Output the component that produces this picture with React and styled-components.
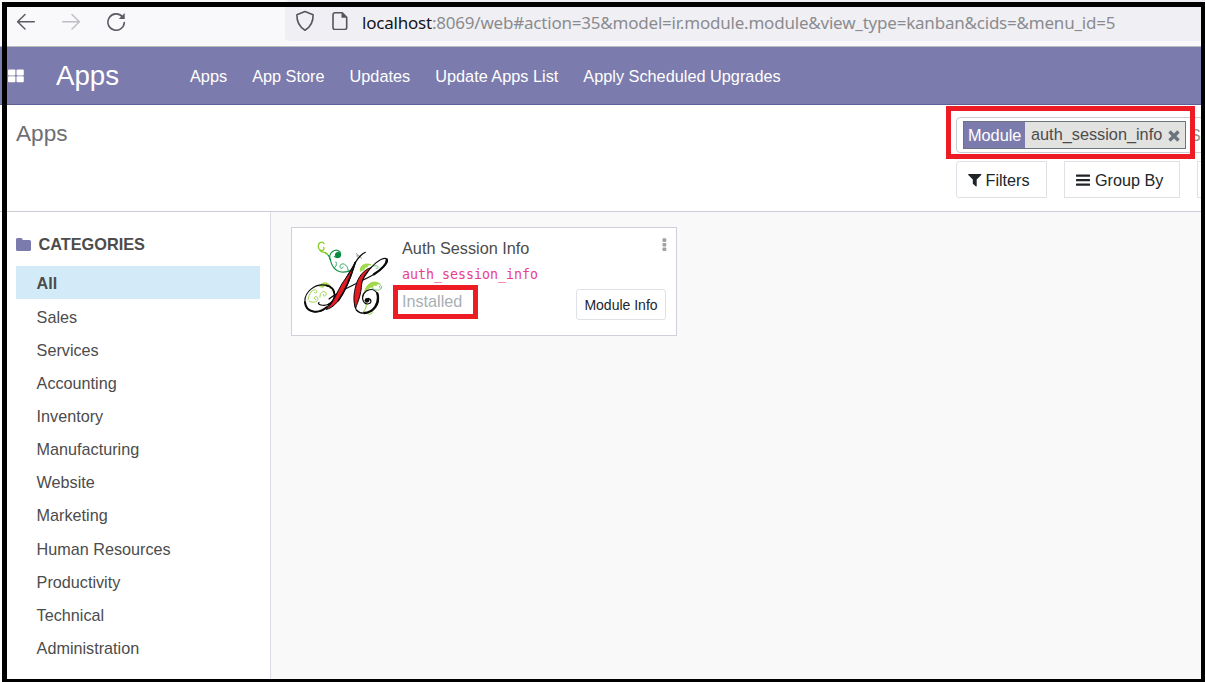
import React from "react";
import styled, { createGlobalStyle } from "styled-components";

const Global = createGlobalStyle`
  *, *::before, *::after { box-sizing: border-box; }
  body { margin: 0; overflow: hidden; }
`;

const Page = styled.div`
  position: relative;
  display: flex;
  flex-direction: column;
  width: 1205px;
  height: 682px;
  overflow: hidden;
  background: #fff;
  color: #4c4c4c;
  font: 16px/24px "Liberation Sans", Arial, sans-serif;
  white-space: nowrap;
`;

const Frame = styled.div`
  position: absolute;
  top: 2px;
  left: 2px;
  right: -1px;
  bottom: -2px;
  border: 5px solid #000;
  pointer-events: none;
`;

const Marker = styled.div`
  position: absolute;
  inset: ${(p) => p.$inset};
  border: 5px solid #ed1c24;
  pointer-events: none;
`;

const BrowserBar = styled.div`
  display: flex;
  flex: none;
  height: 47px;
  padding-left: 16px;
  background: #f9f9fb;
  border-bottom: 1px solid #bcbcbc;
`;

const BrowserButtons = styled.div`
  display: flex;
  width: 269px;
  gap: 25px;
  padding-top: 12px;
`;

const AddressBar = styled.div`
  display: flex;
  flex: 1;
  height: 41px;
  padding: 10px 0 0 10px;
  background: #f0f0f4;
  border-radius: 4px 0 0 4px;
`;

const Url = styled.span`
  margin-left: 13px;
  color: #8b8b8f;
  font: 17px/26px "Noto Sans", "Open Sans", sans-serif;
  letter-spacing: ${(p) => p.$spacing}px;

  b {
    color: #15141a;
    font-weight: 400;
  }
`;

const NavBar = styled.nav`
  display: flex;
  flex: none;
  align-items: center;
  height: 58px;
  padding-left: 8px;
  background: #7c7bad;
  border-bottom: 1px solid #5f5e97;
  color: #fff;
`;

const Brand = styled.span`
  width: 134px;
  margin-left: 32px;
  font-size: 27.7px;
`;

const NavLink = styled.a`
  margin-right: 25px;
  font-size: 16.3px;
`;

const ControlPanel = styled.header`
  display: flex;
  flex: none;
  justify-content: space-between;
  height: 107px;
  padding-left: 16px;
  border-bottom: 1px solid #c9ccd2;
`;

const Title = styled.h1`
  margin: 15px 0 0;
  color: #6c6f73;
  font-size: 22.6px;
  font-weight: 400;
  line-height: 27px;
`;

const SearchArea = styled.div`
  position: relative;
  width: 249px;
  padding-top: 12px;
`;

const SearchBox = styled.div`
  display: flex;
  width: 320px;
  height: 36px;
  padding: 3px 6px;
  border: 1px solid #c9ccd2;
  border-radius: 4px;
  color: #8f8f8f;
  line-height: 30px;
`;

const Facet = styled.div`
  display: flex;
  width: 223px;
  height: 28px;
  margin-right: 4px;
  border: 1px solid #6c757d;
  background: #e2e2e0;
  color: #4c4c4c;
  line-height: 26px;
`;

const FacetLabel = styled.span`
  width: 61px;
  padding-left: 4px;
  background: #7c7bad;
  color: #fff;
  font-size: 16.3px;
`;

const FacetValue = styled.span`
  width: 143px;
  padding-left: 6px;
  font-size: 16.3px;
  line-height: 24px;
`;

const FilterRow = styled.div`
  display: flex;
  gap: 17px;
  width: 341px;
  margin-top: 8px;
`;

const FilterButton = styled.button`
  display: flex;
  align-items: center;
  width: ${(p) => p.$width}px;
  height: 37px;
  padding: 0 0 0 11px;
  gap: 4px;
  border: 1px solid #dee2e6;
  border-radius: ${(p) => (p.$first ? "3px 0 0 3px" : "0")};
  background: #fff;
  color: #212529;
  font: 16.2px/24px "Liberation Sans", Arial, sans-serif;
`;

const Body = styled.div`
  display: flex;
  flex: 1;
  min-height: 0;
`;

const Sidebar = styled.aside`
  width: 271px;
  padding: 20px 10px 0 16px;
  border-right: 1px solid #dcdde4;
`;

const SidebarHeading = styled.div`
  display: flex;
  align-items: center;
  gap: 7.5px;
  height: 24px;
  margin-bottom: 10px;
  font-size: 16.3px;
  font-weight: 700;
  line-height: 26px;
`;

const Category = styled.div`
  height: 33.065px;
  padding-left: 20.6px;
  background: ${(p) => (p.$active ? "#d3ebf8" : "transparent")};
  font-size: 16.2px;
  font-weight: ${(p) => (p.$active ? 700 : 400)};
  line-height: ${(p) => (p.$active ? 35 : 36.6)}px;
`;

const Content = styled.main`
  flex: 1;
  padding: 15px 20px;
  background: #f9f9f9;
`;

const Card = styled.article`
  position: relative;
  display: flex;
  width: 386px;
  height: 109px;
  padding: 10px 10px 10px 11px;
  border: 1px solid #ced0da;
  background: #fff;
`;

const CardText = styled.div`
  width: 174px;
  margin-left: 14px;
`;

const CardTitle = styled.div`
  height: 24px;
  font-size: 16.25px;
  line-height: 21px;
`;

const TechName = styled.div`
  height: 27px;
  color: #e83e8c;
  font: 13.3px/26px "DejaVu Sans Mono", monospace;
`;

const Status = styled.div`
  color: #a8afb5;
  font-size: 16.2px;
`;

const CardSide = styled.div`
  display: flex;
  flex-direction: column;
  justify-content: space-between;
  align-items: flex-end;
  width: 90px;
  height: 82px;
`;

const InfoButton = styled.button`
  width: 90px;
  height: 31px;
  padding: 1px 0 0;
  border: 1px solid #dee2e6;
  border-radius: 3px;
  background: #fff;
  color: #212529;
  font: 14px/20px "Liberation Sans", Arial, sans-serif;
`;

const stroke = { fill: "none", strokeLinecap: "round", strokeLinejoin: "round" };

const BackIcon = ({ color }) => (
  <svg width="20" height="20" {...stroke} stroke={color} strokeWidth="1.5">
    <path d="M18.3 9.8H1.8M9 2.5 1.6 9.8 9 17" />
  </svg>
);

const ForwardIcon = ({ color }) => (
  <svg width="20" height="20" {...stroke} stroke={color} strokeWidth="1.4">
    <path d="M1.7 9.8H18.2M11 2.5 18.4 9.8 11 17" />
  </svg>
);

const ReloadIcon = () => (
  <svg width="20" height="20" {...stroke} stroke="#5b5b66" strokeWidth="1.6">
    <path d="M16.4 4.8A8.2 8.2 0 1 0 18.3 10.5" />
    <path d="M18.7 1v5.9h-5.9z" fill="#5b5b66" stroke="none" />
  </svg>
);

const ShieldIcon = () => (
  <svg width="20" height="22" {...stroke} stroke="#55555e" strokeWidth="1.6">
    <path d="M10 1.6 18.1 4.8C18.3 12 15.6 17 10 20.2 4.4 17 1.7 12 1.9 4.8Z" />
  </svg>
);

const FileIconSvg = styled.svg`
  margin-left: 16px;
`;

const FileIcon = () => (
  <FileIconSvg width="18" height="20" {...stroke} stroke="#55555e" strokeWidth="1.6">
    <path d="M4 2.8h7.3l4.4 4.4V17.5a2 2 0 0 1-2 2H4a2 2 0 0 1-2-2V4.8a2 2 0 0 1 2-2Z" />
    <path d="M10.5 2.5v5.2h5.4z" fill="#55555e" stroke="none" />
  </FileIconSvg>
);

const GridIcon = () => (
  <svg width="16" height="14" fill="#fff">
    <rect x="0" y="0.4" width="7.4" height="6" rx="1" />
    <rect x="8.5" y="0.4" width="7.3" height="6" rx="1" />
    <rect x="0" y="7.3" width="7.4" height="6" rx="1" />
    <rect x="8.5" y="7.3" width="7.3" height="6" rx="1" />
  </svg>
);

const FolderIcon = () => (
  <svg width="15" height="13" fill="#7c7bad">
    <path d="M0 1.7A1.6 1.6 0 0 1 1.6 0H5a1.6 1.6 0 0 1 1.6 1.6V2h6.8A1.6 1.6 0 0 1 15 3.6v7.7a1.6 1.6 0 0 1-1.6 1.7H1.6A1.6 1.6 0 0 1 0 11.3Z" />
  </svg>
);

const FunnelIcon = () => (
  <svg width="13.5" height="14" fill="#212529">
    <path d="M.7 1h12.1c.6 0 .8.7.4 1.1L8.7 6.6v6.3c0 .5-.6.8-1 .4L5.1 11c-.2-.2-.3-.3-.3-.5V6.6L.3 2.1C-.1 1.7.1 1 .7 1Z" />
  </svg>
);

const BarsIcon = () => (
  <svg width="15" height="14" fill="#212529">
    <rect y="1.5" width="14" height="2.3" rx=".5" />
    <rect y="6" width="14" height="2.3" rx=".5" />
    <rect y="10.5" width="14" height="2.3" rx=".5" />
  </svg>
);

const RemoveIconSvg = styled.svg`
  margin-top: 8px;
`;

const RemoveIcon = () => (
  <RemoveIconSvg width="12" height="12" stroke="#6c757d" strokeWidth="3.4">
    <path d="m1.5 1.5 9 9M10.5 1.5l-9 9" />
  </RemoveIconSvg>
);

const KebabSvg = styled.svg`
  margin-right: -2px;
`;

const KebabIcon = () => (
  <KebabSvg width="7" height="15" fill="#a2a2a2">
    <rect x="1.5" y="0.3" width="3.8" height="3.6" rx=".8" />
    <rect x="1.5" y="4.9" width="3.8" height="3.6" rx=".8" />
    <rect x="1.5" y="9.5" width="3.8" height="3.6" rx=".8" />
  </KebabSvg>
);

const ModuleLogo = () => (
  <svg width="85" height="80" viewBox="24 18 255 240" {...stroke}>
    <g stroke="#159447" strokeWidth="3.5">
      <path d="M91 63C106 68 104 84 111 98C120 117 140 128 170 114" />
      <path d="M106 84C98 62 122 46 135 60C141 72 127 82 118 73" />
      <path d="M160 118C160 103 147 90 137 98C131 107 140 114 145 105M118 108C124 103 126 96 123 90" strokeWidth="2.5" />
      <circle cx="129" cy="69" r="9" fill="#078a3c" stroke="none" />
    </g>
    <g stroke="#8ccf29" strokeWidth="4">
      <path d="M87 35C80 24 66 35 71 49C76 60 91 55 86 46M75 55C81 66 91 55 98 68" />
      <path d="M196 117C194 101 208 91 228 98C219 98 214 103 217 105C209 104 209 109 208 112Z" fill="#a4d94b" strokeWidth="2" />
      <path d="M215 112C226 110 230 100 243 101C253 103 251 111 243 109" strokeWidth="2.5" stroke="#5cb86a" />
      <path d="M209 176C218 150 240 143 256 157C247 155 243 158 244 161C235 157 233 163 234 166C225 163 224 169 217 174Z" fill="#a4d94b" strokeWidth="2" />
      <path d="M231 169C247 178 259 175 260 165C258 157 250 162 255 168" strokeWidth="2.5" stroke="#5cb86a" />
      <path d="M73 162C80 150 96 148 106 161C100 158 97 161 99 164C91 158 87 163 84 166Z" fill="#b4dc65" strokeWidth="2" />
      <path d="M39 204C42 185 51 171 62 174C70 178 62 188 58 181M43 208C61 216 75 205 66 195C58 190 54 202 62 203M75 196C73 177 93 173 94 187C91 197 81 191 86 187M105 169C115 164 119 174 111 178" strokeWidth="2.5" />
      <path d="M205 239C214 229 216 220 212 212M212 242C223 250 233 247 232 239" strokeWidth="3" />
    </g>
    <path d="M184 64C190 75 197 71 199 79M188 75C181 71 188 67 190 71" stroke="#888" strokeWidth="2.5" />
    <g stroke="#0b0b0b">
      <path d="M211 61C188 71 179 97 165 119C140 159 124 203 95 226C71 247 33 243 30 211C27 180 60 153 94 160C125 167 126 205 101 217C84 224 65 217 72 211" strokeWidth="3.5" />
      <path d="M94 160C125 167 126 205 101 217" strokeWidth="5" />
      <path d="M30 211C33 243 71 247 95 226" strokeWidth="6" />
      <path d="M102 201C135 174 193 153 237 127C266 109 285 88 275 80C260 74 226 102 208 134C188 169 170 211 184 234C201 253 243 241 250 208C254 180 234 164 213 178C196 191 202 215 218 216C231 214 231 202 219 199" strokeWidth="3.5" />
      <path d="M275 84C276 96 259 112 237 127M247 184C255 215 235 241 208 243" strokeWidth="7" />
      <path d="M181 91C169 130 156 171 130 206C115 225 102 231 93 232C115 216 126 177 145 149C157 132 169 116 181 91Z" fill="#e51b23" strokeWidth="3" />
      <path d="M181 91C169 130 156 171 130 206" strokeWidth="5" />
      <path d="M228 108C209 124 200 143 199 167C196 198 183 222 182 229C172 204 178 174 186 150C196 125 212 111 228 108Z" fill="#e51b23" strokeWidth="3" />
      <circle cx="216" cy="205" r="7" fill="#0b0b0b" stroke="none" />
    </g>
  </svg>
);

const navLinks = ["Apps", "App Store", "Updates", "Update Apps List", "Apply Scheduled Upgrades"];

const categories = [
  "All", "Sales", "Services", "Accounting", "Inventory", "Manufacturing",
  "Website", "Marketing", "Human Resources", "Productivity", "Technical", "Administration",
];

export default function App() {
  return (
    <Page>
      <Global />
      <BrowserBar>
        <BrowserButtons>
          <BackIcon color="#5b5b66" />
          <ForwardIcon color="#bebec3" />
          <ReloadIcon />
        </BrowserButtons>
        <AddressBar>
          <ShieldIcon />
          <FileIcon />
          <Url $spacing={-0.21}>
            <b>localhost</b>:8069/web#action=35&amp;model=ir.module.module&amp;view_type=kanban&amp;cids=&amp;menu_id=5
          </Url>
        </AddressBar>
      </BrowserBar>

      <NavBar>
        <GridIcon />
        <Brand>Apps</Brand>
        {navLinks.map((label) => (
          <NavLink key={label}>{label}</NavLink>
        ))}
      </NavBar>

      <ControlPanel>
        <Title>Apps</Title>
        <SearchArea>
          <SearchBox>
            <Facet>
              <FacetLabel>Module</FacetLabel>
              <FacetValue>auth_session_info</FacetValue>
              <RemoveIcon />
            </Facet>
            Search...
          </SearchBox>
          <FilterRow>
            <FilterButton $width={91} $first><FunnelIcon />Filters</FilterButton>
            <FilterButton $width={116}><BarsIcon />Group By</FilterButton>
            <FilterButton $width={80} />
          </FilterRow>
          <Marker $inset="1px 10px 52px -10px" />
        </SearchArea>
      </ControlPanel>

      <Body>
        <Sidebar>
          <SidebarHeading><FolderIcon />CATEGORIES</SidebarHeading>
          {categories.map((name) => (
            <Category key={name} $active={name === "All"}>{name}</Category>
          ))}
        </Sidebar>
        <Content>
          <Card>
            <ModuleLogo />
            <CardText>
              <CardTitle>Auth Session Info</CardTitle>
              <TechName>auth_session_info</TechName>
              <Status>Installed</Status>
            </CardText>
            <CardSide>
              <KebabIcon />
              <InfoButton>Module Info</InfoButton>
            </CardSide>
            <Marker $inset="57px 198px 16px 101px" />
          </Card>
        </Content>
      </Body>
      <Frame />
    </Page>
  );
}
